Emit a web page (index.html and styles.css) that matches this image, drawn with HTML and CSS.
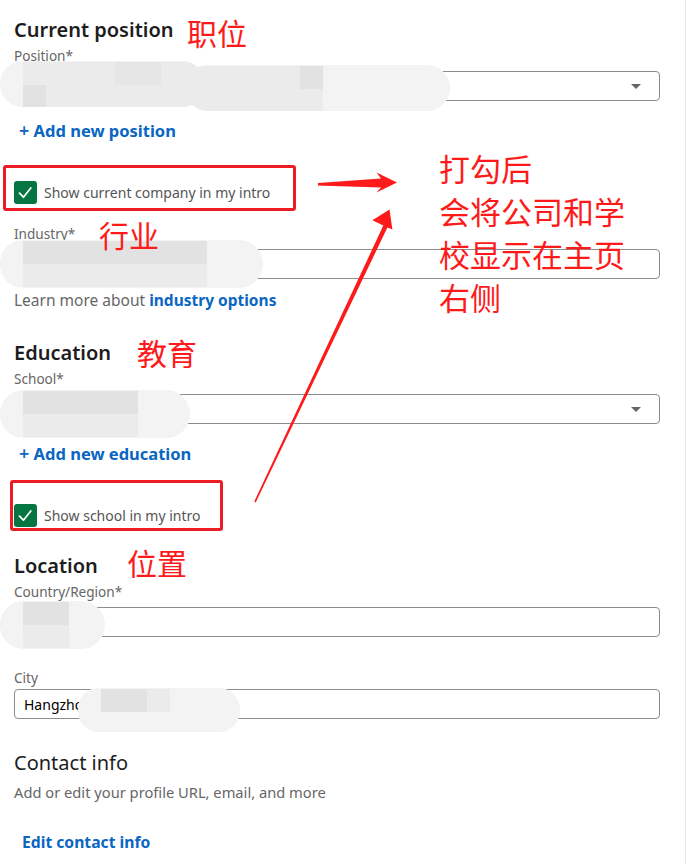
FILE: index.html
```html
<!DOCTYPE html>
<html lang="en">
<head>
    <meta charset="UTF-8">
    <meta name="viewport" content="width=device-width, initial-scale=1.0">
    <title>Edit intro</title>
    <link rel="stylesheet" href="styles.css">
</head>
<body>
    <div class="page">
        <div class="form">
            <section class="group">
                <h2 class="group-title first">Current position</h2>
                <div class="field">
                    <span class="field-label">Position*</span>
                    <div class="input select"><span class="caret"></span></div>
                </div>
                <a class="add-link" href="#"><span class="plus">+</span> Add new position</a>
                <label class="check-row">
                    <span class="check">
                        <svg viewBox="0 0 23 23" width="23" height="23"><path d="M5.5 12.2 L9.4 16.2 L16.8 7" fill="none" stroke="#fff" stroke-width="1.8" stroke-linecap="round" stroke-linejoin="round"/></svg>
                    </span>
                    <span>Show current company in my intro</span>
                </label>
                <div class="field field-industry">
                    <span class="field-label">Industry*</span>
                    <div class="input"></div>
                </div>
                <p class="hint">Learn more about <a href="#">industry options</a></p>
            </section>

            <section class="group">
                <h2 class="group-title education">Education</h2>
                <div class="field">
                    <span class="field-label">School*</span>
                    <div class="input select"><span class="caret"></span></div>
                </div>
                <a class="add-link" href="#"><span class="plus">+</span> Add new education</a>
                <label class="check-row">
                    <span class="check">
                        <svg viewBox="0 0 23 23" width="23" height="23"><path d="M5.5 12.2 L9.4 16.2 L16.8 7" fill="none" stroke="#fff" stroke-width="1.8" stroke-linecap="round" stroke-linejoin="round"/></svg>
                    </span>
                    <span>Show school in my intro</span>
                </label>
            </section>

            <section class="group">
                <h2 class="group-title location">Location</h2>
                <div class="field">
                    <span class="field-label">Country/Region*</span>
                    <div class="input"></div>
                </div>
                <div class="field field-city">
                    <span class="field-label">City</span>
                    <div class="input"><span class="input-text">Hangzhou</span></div>
                </div>
            </section>

            <section class="group contact">
                <h3 class="contact-title">Contact info</h3>
                <p class="contact-sub">Add or edit your profile URL, email, and more</p>
                <a class="edit-link" href="#">Edit contact info</a>
            </section>
        </div>

        <!-- privacy mosaic over the filled-in values -->
        <div class="blob blob-pos-a"><i class="t3"></i><i class="t3"></i><i class="t1"></i><i class="t2"></i><i class="t1"></i><i class="t1"></i><i class="t1"></i><i class="t1"></i><i class="t1"></i><i class="t1"></i><i class="t4"></i><i class="t1"></i><i class="t4"></i><i class="t1"></i><i class="t1"></i><i class="t1"></i><i class="t1"></i><i class="t1"></i></div>
        <div class="blob blob-pos-b"><i class="t1"></i><i class="t1"></i><i class="t1"></i><i class="t1"></i><i class="t1"></i><i class="t1"></i><i class="t1"></i><i class="t1"></i><i class="t1"></i><i class="t1"></i><i class="t2"></i><i class="t1"></i><i class="t3"></i><i class="t3"></i><i class="t3"></i><i class="t3"></i><i class="t3"></i><i class="t3"></i><i class="t3"></i><i class="t3"></i><i class="t3"></i><i class="t3"></i></div>
        <div class="blob blob-industry"><i class="t3"></i><i class="t3"></i><i class="t2"></i><i class="t1"></i><i class="t2"></i><i class="t1"></i><i class="t2"></i><i class="t1"></i><i class="t2"></i><i class="t1"></i><i class="t2"></i><i class="t1"></i><i class="t2"></i><i class="t1"></i><i class="t2"></i><i class="t1"></i><i class="t2"></i><i class="t1"></i><i class="t3"></i><i class="t3"></i><i class="t3"></i><i class="t3"></i></div>
        <div class="blob blob-school"><i class="t3"></i><i class="t3"></i><i class="t2"></i><i class="t1"></i><i class="t2"></i><i class="t1"></i><i class="t2"></i><i class="t1"></i><i class="t2"></i><i class="t1"></i><i class="t2"></i><i class="t1"></i><i class="t3"></i><i class="t3"></i><i class="t3"></i><i class="t3"></i></div>
        <div class="blob blob-country"><i class="t3"></i><i class="t3"></i><i class="t2"></i><i class="t1"></i><i class="t2"></i><i class="t1"></i><i class="t3"></i><i class="t3"></i></div>
        <div class="blob blob-city"><i class="t3"></i><i class="t3"></i><i class="t2"></i><i class="t3"></i><i class="t2"></i><i class="t3"></i><i class="t1"></i><i class="t3"></i><i class="t3"></i><i class="t3"></i><i class="t3"></i><i class="t3"></i></div>

        <!-- annotations -->
        <div class="mark mark-company"></div>
        <div class="mark mark-school"></div>

        <span class="note note-position">职位</span>
        <span class="note note-industry">行业</span>
        <span class="note note-education">教育</span>
        <span class="note note-location">位置</span>
        <p class="note note-block">打勾后<br>会将公司和学<br>校显示在主页<br>右侧</p>

        <svg class="arrows" viewBox="0 0 687 864" width="687" height="864">
            <polygon points="318,183 381,178.6 376.5,172.6 397,182.6 376.5,192.6 381,187.4 318,185.6" fill="#fe1a1a"/>
            <polygon points="254.3,501.6 383.3,225.6 372.4,220.3 389.5,209.5 392.4,229.5 387.4,227.5 255.7,502.4" fill="#fe1a1a"/>
        </svg>
    </div>
</body>
</html>
```

FILE: styles.css
```css
:root {
    --color-text: #1d1d1d;
    --color-muted: #666666;
    --color-link: #0a66c2;
    --color-border: #8c8c8c;
    --color-check: #057642;
    --color-note: #fe1a1a;
}

body {
    margin: 0;
    padding: 0;
    background: #ffffff;
    font-family: 'Noto Sans', 'Open Sans', sans-serif;
    color: var(--color-text);
}

.page {
    position: relative;
    width: 685px;
    height: 864px;
    border-right: 1px solid #e6e6e6;
    overflow: hidden;
}

.form {
    padding-left: 14px;
    width: 646px;
}

.group-title {
    margin: 0;
    font-size: 20px;
    line-height: 24px;
    font-weight: 600;
}

.group-title.first {
    margin-top: 18px;
}

.group-title.education {
    margin-top: 31px;
}

.group-title.location {
    margin-top: 27px;
}

.field {
    display: flex;
    flex-direction: column;
}

.field-label {
    margin-top: 6px;
    margin-bottom: 7px;
    font-size: 13.6px;
    line-height: 16px;
    height: 16px;
    color: var(--color-muted);
}

.field-industry {
    margin-top: 16px;
}

.field-city {
    margin-top: 27px;
}

.field-city .field-label {
    margin-bottom: 3px;
}

.input {
    box-sizing: border-box;
    height: 30px;
    border: 1px solid var(--color-border);
    border-radius: 4px;
    display: flex;
    align-items: center;
    padding: 0 18px 0 9px;
}

.select {
    justify-content: flex-end;
}

.caret {
    width: 0;
    height: 0;
    border-left: 5px solid transparent;
    border-right: 5px solid transparent;
    border-top: 5px solid #666666;
}

.input-text {
    font-size: 14px;
    color: #000000;
}

.add-link {
    display: block;
    margin-top: 20px;
    padding-left: 5px;
    height: 20px;
    font-size: 16.5px;
    line-height: 20px;
    font-weight: 700;
    color: var(--color-link);
    text-decoration: none;
}

.plus {
    font-size: 18px;
    line-height: 1;
    font-weight: 600;
}

.check-row {
    display: flex;
    align-items: center;
    gap: 7px;
    margin-top: 40px;
    height: 23px;
    font-size: 14px;
    color: #555555;
}

.check {
    width: 23px;
    height: 23px;
    border-radius: 3px;
    background: var(--color-check);
    display: flex;
}

.hint {
    margin: 11px 0 0;
    height: 20px;
    font-size: 15.5px;
    line-height: 20px;
    color: var(--color-muted);
}

.hint a {
    color: var(--color-link);
    font-weight: 700;
    text-decoration: none;
}

.contact-title {
    margin: 32px 0 0;
    font-size: 20px;
    line-height: 24px;
    font-weight: 400;
}

.contact-sub {
    margin: 7px 0 0;
    height: 20px;
    font-size: 14.7px;
    line-height: 20px;
    color: var(--color-muted);
}

.edit-link {
    display: block;
    margin-top: 30px;
    padding-left: 8px;
    font-size: 15.7px;
    line-height: 20px;
    font-weight: 700;
    color: var(--color-link);
    text-decoration: none;
}

/* mosaic blobs */
.blob {
    position: absolute;
    display: grid;
    grid-template-rows: 23px 23px;
    grid-auto-flow: column;
    grid-auto-columns: 23px;
    padding: 1px 0;
    background: #f3f3f3;
    border-radius: 24px;
    overflow: hidden;
    filter: blur(0.6px);
}

.blob i {
    display: block;
}

.blob .t1 { background: #ebebeb; }
.blob .t2 { background: #e2e2e2; }
.blob .t3 { background: #f3f3f3; }
.blob .t4 { background: #e6e6e6; }

.blob-pos-a { left: 0; top: 61px; width: 205px; height: 44px; }
.blob-pos-b { left: 185px; top: 65px; width: 265px; height: 44px; }
.blob-industry { left: 0; top: 240px; width: 263px; height: 46px; }
.blob-school { left: 0; top: 390px; width: 190px; height: 46px; }
.blob-country { left: 0; top: 601px; width: 105px; height: 46px; }
.blob-city { left: 78px; top: 688px; width: 162px; height: 42px; border-radius: 21px; }

/* annotations */
.mark {
    position: absolute;
    border: 3px solid #ec1c24;
    border-radius: 3px;
}

.mark-company { left: 3px; top: 165px; width: 287px; height: 40px; }
.mark-school { left: 10px; top: 480px; width: 207px; height: 45px; }

.note {
    position: absolute;
    margin: 0;
    font-family: 'Noto Sans CJK SC', sans-serif;
    font-size: 30px;
    line-height: 30px;
    color: var(--color-note);
}

.note-position { left: 187px; top: 17px; }
.note-industry { left: 99px; top: 219px; }
.note-education { left: 137px; top: 337px; }
.note-location { left: 127px; top: 547px; }

.note-block {
    left: 439px;
    top: 146px;
    font-size: 31px;
    line-height: 43px;
}

.arrows {
    position: absolute;
    left: 0;
    top: 0;
}
```
